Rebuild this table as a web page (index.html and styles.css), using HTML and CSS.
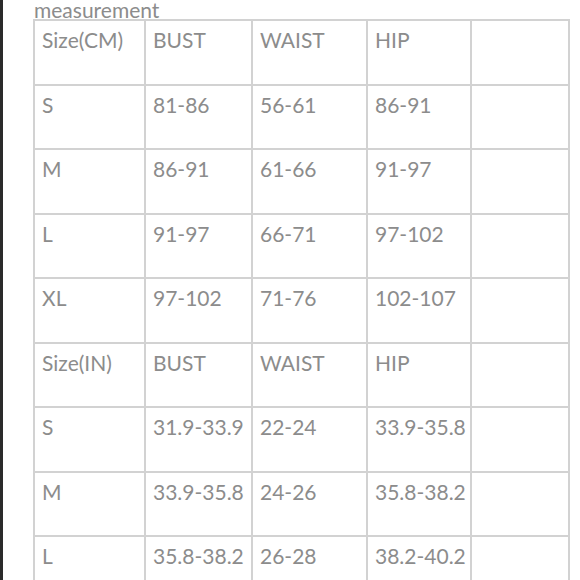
FILE: index.html
```html
<!DOCTYPE html>
<html>
<head>
<meta charset="utf-8">
<link rel="stylesheet" href="styles.css">
</head>
<body>
<div class="page">
  <div class="title">measurement</div>
  <table class="chart">
    <colgroup>
      <col class="c1"><col class="c2"><col class="c3"><col class="c4"><col class="c5">
    </colgroup>
    <tbody>
      <tr><td>Size(CM)</td><td>BUST</td><td>WAIST</td><td>HIP</td><td></td></tr>
      <tr><td>S</td><td>81-86</td><td>56-61</td><td>86-91</td><td></td></tr>
      <tr><td>M</td><td>86-91</td><td>61-66</td><td>91-97</td><td></td></tr>
      <tr><td>L</td><td>91-97</td><td>66-71</td><td>97-102</td><td></td></tr>
      <tr><td>XL</td><td>97-102</td><td>71-76</td><td>102-107</td><td></td></tr>
      <tr><td>Size(IN)</td><td>BUST</td><td>WAIST</td><td>HIP</td><td></td></tr>
      <tr><td>S</td><td>31.9-33.9</td><td>22-24</td><td>33.9-35.8</td><td></td></tr>
      <tr><td>M</td><td>33.9-35.8</td><td>24-26</td><td>35.8-38.2</td><td></td></tr>
      <tr><td>L</td><td>35.8-38.2</td><td>26-28</td><td>38.2-40.2</td><td></td></tr>
    </tbody>
  </table>
</div>
</body>
</html>
```
FILE: styles.css
```css
html, body {
  margin: 0;
  padding: 0;
  background: #ffffff;
}
body {
  height: 580px;
  overflow: hidden;
}
.page {
  border-left: 3px solid #2a2a2a;
  min-height: 580px;
  padding-left: 30px;
  box-sizing: border-box;
  font-family: Lato, "Open Sans", sans-serif;
  color: #8c8c8c;
}
.title {
  font-size: 21px;
  line-height: 20px;
  height: 19px;
  padding-left: 1px;
}
.chart {
  border-collapse: collapse;
  table-layout: fixed;
  width: 537px;
}
.c1 { width: 111px; }
.c2 { width: 107px; }
.c3 { width: 115px; }
.c4 { width: 104px; }
.c5 { width: 98px; }
.chart td {
  border: 2px solid #d2d2d2;
  height: 64.5px;
  padding: 6px 0 0 7px;
  box-sizing: border-box;
  vertical-align: top;
  font-size: 21px;
  line-height: 26px;
  white-space: nowrap;
}
```
